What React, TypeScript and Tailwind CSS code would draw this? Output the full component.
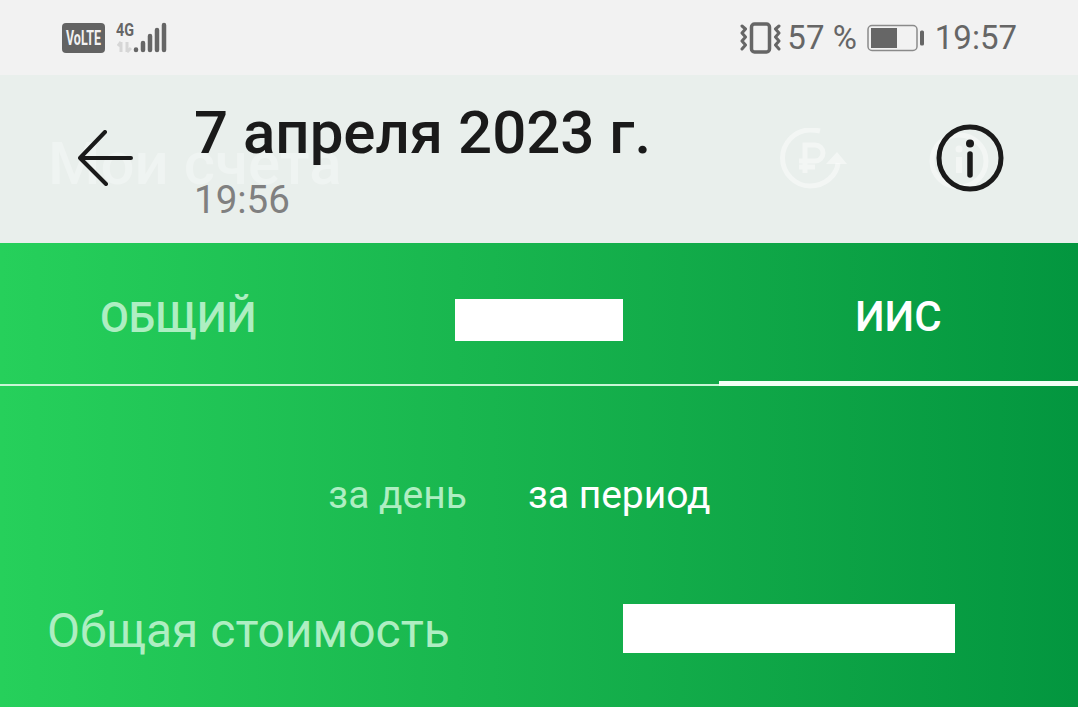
export default function App() {
  return (
    <div className="w-[1078px] h-[707px] overflow-hidden flex flex-col font-['Roboto',sans-serif]">
      {/* status bar */}
      <div className="h-[75px] bg-[#f2f2f2] flex items-center justify-between pl-[62px] pr-[61px] text-[#666666]">
        <div className="flex items-center gap-[11px]">
          <svg width="43" height="30" viewBox="0 0 43 30">
            <rect width="43" height="30" rx="4" fill="#636363" />
            <text x="4" y="22" fontSize="21" fontWeight="700" fill="#f2f2f2" fontFamily="Roboto" textLength="35" lengthAdjust="spacingAndGlyphs">VoLTE</text>
          </svg>
          <svg width="52" height="32" viewBox="0 0 52 32" className="-mt-[1px]">
            <text x="0" y="15" fontSize="18" fontWeight="700" fill="#666" fontFamily="Roboto" textLength="18" lengthAdjust="spacingAndGlyphs">4G</text>
            <path d="M5 21v10M2 25l3-4M11 21v10M11 31l4-4" fill="none" stroke="#d6d6d6" strokeWidth="3" />
            <g stroke="#666" strokeWidth="4.5" strokeLinecap="round">
              <path d="M20 28.5v.5M27 22v7M34 15v14M41 9v20M48 4v25" />
            </g>
          </svg>
        </div>
        <div className="flex items-center">
          <svg width="41" height="32" viewBox="0 0 41 32" className="mr-[6px]" fill="none" stroke="#666">
            <rect x="11.5" y="2" width="18" height="28" rx="3" strokeWidth="3.5" />
            <path d="M2 3l3.5 3-3.5 4 3.5 4-3.5 4 3.5 4-3.5 4" strokeWidth="3" strokeLinecap="round" strokeLinejoin="round" transform="translate(0 1)" />
            <path d="M39 3l-3.5 3 3.5 4-3.5 4 3.5 4-3.5 4 3.5 4" strokeWidth="3" strokeLinecap="round" strokeLinejoin="round" transform="translate(0 1)" />
          </svg>
          <span className="text-[33px] leading-none whitespace-nowrap">57 %</span>
          <svg width="58" height="28" viewBox="0 0 58 28" className="ml-[10px] mr-[10px]">
            <rect x="1" y="1.5" width="49" height="25" rx="4" fill="none" stroke="#8a8a8a" strokeWidth="1.5" />
            <rect x="4" y="4" width="26" height="20" fill="#666" />
            <rect x="53" y="6.5" width="4" height="15" rx="1.5" fill="#666" />
          </svg>
          <span className="text-[33px] leading-none">19:57</span>
        </div>
      </div>

      {/* header */}
      <div className="relative h-[168px] bg-[#e9efec] flex items-center pl-[78px] pr-[74px]">
        <div className="absolute left-[48px] top-[54px] text-[60px] leading-[70px] font-medium text-white/30 whitespace-nowrap">Мои счета</div>
        <svg width="56" height="56" viewBox="0 0 56 56" fill="none" stroke="#1a1a1a" strokeWidth="4" strokeLinecap="round" strokeLinejoin="round" className="relative mt-[-2px] mr-[61px] shrink-0">
          <path d="M2 28h51M27 2L2 28l26 26" />
        </svg>
        <div className="relative flex-1 mt-[1px]">
          <div className="text-[60px] leading-[70px] font-medium text-[#1a1a1a] whitespace-nowrap -ml-[1px]">7 апреля 2023 г.</div>
          <div className="text-[38.500px] leading-[44px] text-[#808080] mt-[10px] -ml-[1px]">19:56</div>
        </div>
        <svg width="68" height="62" viewBox="0 0 68 62" fill="none" className="absolute left-[780px] top-[53px]" stroke="#ffffff" strokeOpacity="0.45">
          <path d="M40 3C36 2 33 2 30 2 15 2 2.500 15 2.500 30S15 58 30 58c15 0 27-11 28-23" strokeWidth="5" />
          <path d="M57 24L46 36h21z" fill="#ffffff" fillOpacity="0.45" stroke="none" />
          <path d="M25 45V17h10a8 8 0 0 1 0 16H19M19 39h16" strokeWidth="5" />
        </svg>
        <svg width="60" height="58" viewBox="0 0 60 58" fill="none" className="absolute left-[929px] top-[57px]" stroke="#ffffff" strokeOpacity="0.45">
          <ellipse cx="30" cy="29" rx="27" ry="26" strokeWidth="5" />
          <path d="M30 25v16" strokeWidth="6" />
          <circle cx="30" cy="17" r="3.500" fill="#ffffff" fillOpacity="0.45" stroke="none" />
        </svg>
        <svg width="68" height="68" viewBox="0 0 68 68" fill="none" stroke="#1a1a1a" className="relative mt-[-2px] ml-auto shrink-0">
          <circle cx="34" cy="34" r="31" strokeWidth="5" />
          <path d="M34 30v21" strokeWidth="5.500" strokeLinecap="round" />
          <circle cx="34" cy="19.500" r="4" fill="#1a1a1a" stroke="none" />
        </svg>
      </div>

      {/* green */}
      <div className="flex-1 bg-gradient-to-r from-[#26d05b] to-[#03963f] flex flex-col">
        <div className="h-[143px] grid grid-cols-3 border-b-2 border-[#c9f5d6] text-[42px] font-medium">
          <div className="flex items-center justify-center text-[#aeeec2] pt-[7px] pr-[3px]">ОБЩИЙ</div>
          <div className="flex items-center justify-center pt-[13px]">
            <div className="w-[168px] h-[42px] bg-white" />
          </div>
          <div className="flex items-center justify-center text-white pt-[8px] -mb-[2px] border-b-[5px] border-[#f2fff6]">ИИС</div>
        </div>
        <div className="flex justify-center gap-[61px] text-[39px] leading-[44px] mt-[87px] pr-[39px]">
          <span className="text-[#aeeec2]">за день</span>
          <span className="text-white">за период</span>
        </div>
        <div className="flex items-center pl-[47px] mt-[87px] h-[49px]">
          <span className="text-[48px] leading-none text-[#aeeec2] w-[576px] whitespace-nowrap pt-[5px]">Общая стоимость</span>
          <div className="w-[332px] h-[49px] bg-white" />
        </div>
      </div>
    </div>
  );
}
